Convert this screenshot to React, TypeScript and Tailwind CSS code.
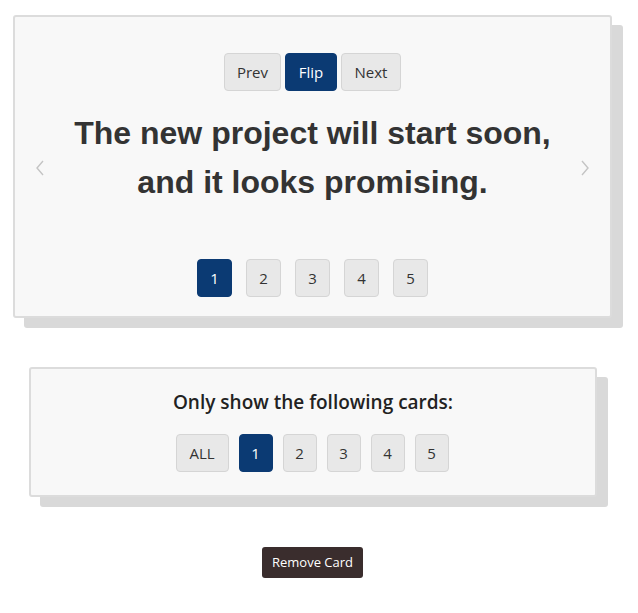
const ui = { fontFamily: '"Open Sans", "Noto Sans", sans-serif' };

function GreyBtn({ label, active, className }: { label: string; active?: boolean; className: string }) {
  return (
    <button
      className={
        "flex items-center justify-center rounded-[4px] border " +
        (active
          ? "bg-[#0b3a73] border-[#0b3a73] text-white "
          : "bg-[#e8e8e8] border-[#d5d5d5] text-[#333] ") +
        className
      }
    >
      {label}
    </button>
  );
}

function Chevron({ dir, className }: { dir: "left" | "right"; className: string }) {
  return (
    <svg width="10" height="16" viewBox="0 0 10 16" className={className} fill="none" stroke="#c4c4c4" strokeWidth="1.4">
      {dir === "left" ? <polyline points="8,1 2,8 8,15" /> : <polyline points="2,1 8,8 2,15" />}
    </svg>
  );
}

export default function App() {
  const pages = ["1", "2", "3", "4", "5"];

  return (
    <div className="bg-white min-h-[613px] w-[638px] pt-[15px]" style={ui}>
      {/* CAROUSEL CARD */}
      <div className="ml-[13px] w-[599px] h-[303px] bg-[#f8f8f8] border-2 border-[#dcdcdc] rounded-[3px] shadow-[11px_10px_0_#d9d9d9] relative flex flex-col items-center pt-[36px]">
        <div className="flex gap-[4px]">
          <GreyBtn label="Prev" className="w-[57px] h-[38px] text-[15px]" />
          <GreyBtn label="Flip" active className="w-[52px] h-[38px] text-[15px]" />
          <GreyBtn label="Next" className="w-[60px] h-[38px] text-[15px]" />
        </div>

        <h1
          className="mt-[18px] text-center text-[32px] font-bold leading-[49px] text-[#333]"
          style={{ fontFamily: '"Liberation Sans", Arial, sans-serif' }}
        >
          The new project will start soon,
          <br />
          and it looks promising.
        </h1>

        <Chevron dir="left" className="absolute left-[20px] top-[143px]" />
        <Chevron dir="right" className="absolute right-[20px] top-[143px]" />

        <div className="mt-[52px] flex gap-[14px]">
          {pages.map((p, i) => (
            <GreyBtn key={p} label={p} active={i === 0} className="w-[35px] h-[38px] text-[15px]" />
          ))}
        </div>
      </div>

      {/* FILTER CARD */}
      <div className="mt-[49px] ml-[29px] w-[568px] h-[130px] bg-[#f8f8f8] border-2 border-[#dcdcdc] rounded-[3px] shadow-[11px_10px_0_#d9d9d9] flex flex-col items-center pt-[20px]">
        <p className="text-[19px] font-semibold text-[#222] leading-[26px]">Only show the following cards:</p>
        <div className="mt-[19px] flex gap-[10px] pr-[2px]">
          <GreyBtn label="ALL" className="w-[53px] h-[38px] text-[15px]" />
          {pages.map((p, i) => (
            <GreyBtn key={p} label={p} active={i === 0} className="w-[34px] h-[38px] text-[15px]" />
          ))}
        </div>
      </div>

      {/* REMOVE */}
      <div className="mt-[50px] flex justify-center pr-[13px]">
        <button className="bg-[#3a2d2d] text-white text-[13px] rounded-[3px] w-[101px] h-[31px]">
          Remove Card
        </button>
      </div>
    </div>
  );
}
